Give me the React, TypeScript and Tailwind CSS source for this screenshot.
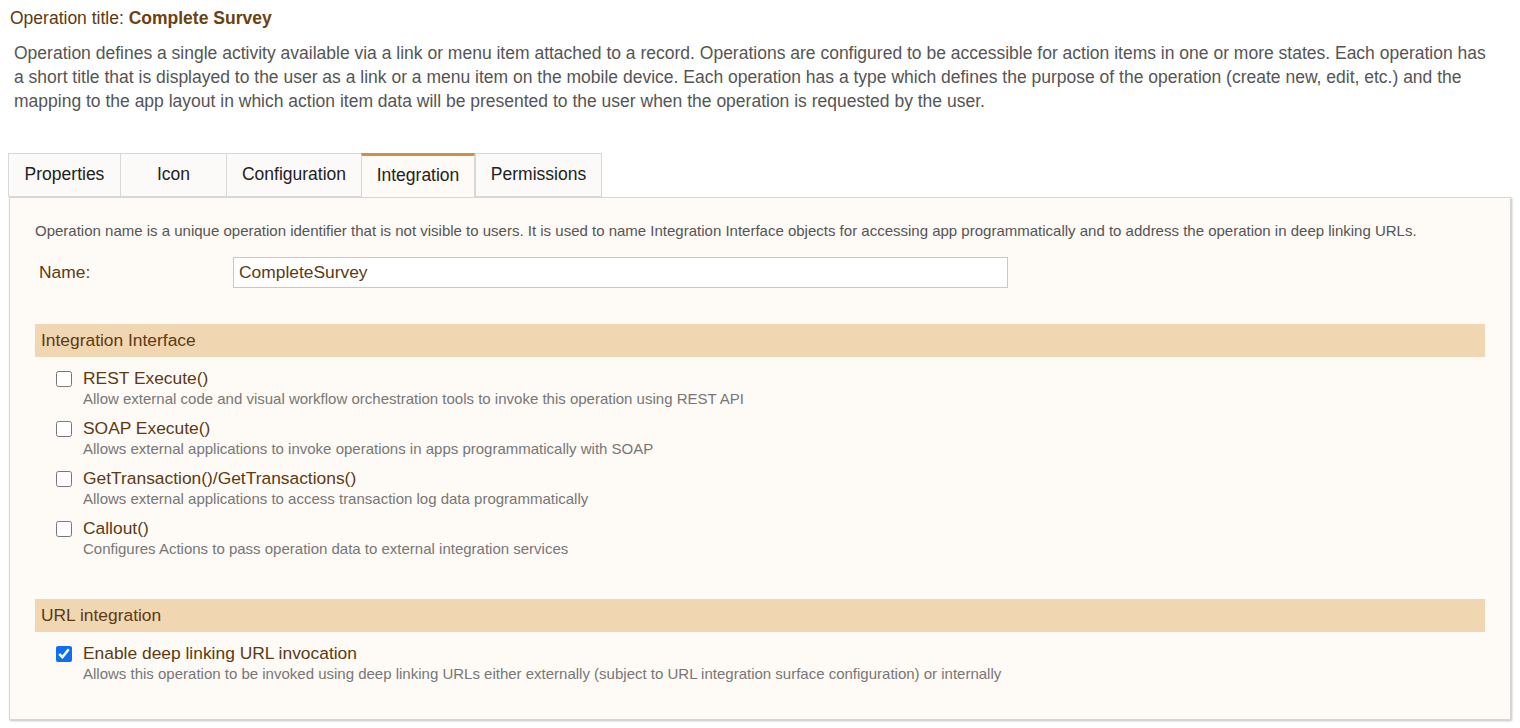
import { useState } from 'react';

const tabs = ['Properties', 'Icon', 'Configuration', 'Integration', 'Permissions'];
const tabWidths = ['w-[112px]', 'w-[106px]', 'w-[135px]', 'w-[114px]', 'w-[127px]'];

const interfaceOptions = [
  { title: 'REST Execute()', desc: 'Allow external code and visual workflow orchestration tools to invoke this operation using REST API' },
  { title: 'SOAP Execute()', desc: 'Allows external applications to invoke operations in apps programmatically with SOAP' },
  { title: 'GetTransaction()/GetTransactions()', desc: 'Allows external applications to access transaction log data programmatically' },
  { title: 'Callout()', desc: 'Configures Actions to pass operation data to external integration services' },
];

function OptionRow({ title, desc, checked }: { title: string; desc: string; checked?: boolean }) {
  const [on, setOn] = useState(!!checked);
  return (
    <label className="flex items-start pl-[21px] h-[50px]">
      <input
        type="checkbox"
        checked={on}
        onChange={() => setOn(!on)}
        className="mt-[3px] size-[16px] m-0 accent-[#0b6ff0]"
      />
      <div className="ml-[11px]">
        <div className="text-[17.4px] leading-[20px] text-[#5c3a14]">{title}</div>
        <div className="text-[15px] leading-[18px] mt-[2px] text-[#777]">{desc}</div>
      </div>
    </label>
  );
}

function SectionHeader({ children }: { children: string }) {
  return (
    <div className="h-[33px] bg-[#f1d6b2] flex items-center pl-[6px] text-[17.4px] text-[#5c3a14]">{children}</div>
  );
}

export default function App() {
  const [active, setActive] = useState(3);
  const [name, setName] = useState('CompleteSurvey');

  return (
    <div className="w-[1520px] h-[728px] bg-white font-['Liberation_Sans',Arial,sans-serif] overflow-hidden">
      {/* Header */}
      <div className="pl-[10px] pt-[8px] text-[17.5px] leading-[20px] text-[#5c3a14]">
        Operation title: <span className="font-bold text-[#6b4211]">Complete Survey</span>
      </div>
      <p className="pl-[14px] pr-[20px] mt-[13px] text-[17.5px] leading-[24px] text-[#555]">
        Operation defines a single activity available via a link or menu item attached to a record. Operations are configured to be accessible for action items in one or more states. Each operation has a short title that is displayed to the user as a link or a menu item on the mobile device. Each operation has a type which defines the purpose of the operation (create new, edit, etc.) and the mapping to the app layout in which action item data will be presented to the user when the operation is requested by the user.
      </p>

      {/* Tabs */}
      <div className="pl-[8px] mt-[40px] flex relative z-10">
        {tabs.map((t, i) => (
          <button
            key={t}
            onClick={() => setActive(i)}
            className={
              `${tabWidths[i]} h-[44px] text-[17.5px] text-[#222] border-l border-[#d8d8d8] pb-[2px] ` +
              (i === tabs.length - 1 ? 'border-r ' : '') +
              (i === active
                ? 'bg-[#fefaf5] border-t-[3px] border-t-[#c9914c] border-r border-r-[#d8d8d8] -mb-px'
                : 'bg-[#fbfaf8] border-t border-t-[#d8d8d8] border-b border-b-[#d8d8d8]')
            }
          >
            {t}
          </button>
        ))}
      </div>

      {/* Panel */}
      <div className="ml-[9px] w-[1502px] h-[523px] bg-[#fefaf5] border border-[#d6d6d6] shadow-[1px_1px_2px_rgba(0,0,0,0.25)] px-[25px]">
        <p className="mt-[24px] text-[15px] leading-[18px] text-[#555]">
          Operation name is a unique operation identifier that is not visible to users. It is used to name Integration Interface objects for accessing app programmatically and to address the operation in deep linking URLs.
        </p>
        <div className="flex items-center mt-[17px]">
          <span className="w-[198px] pl-[4px] text-[17.4px] text-[#5c3a14]">Name:</span>
          <input
            value={name}
            onChange={(e) => setName(e.target.value)}
            className="w-[775px] h-[31px] border border-[#c8c8c8] bg-white px-[5px] text-[17.4px] text-[#5c3a14] outline-none"
          />
        </div>

        <div className="mt-[36px] w-[1450px]">
          <SectionHeader>Integration Interface</SectionHeader>
          <div className="pt-[11px]">
            {interfaceOptions.map((o) => (
              <OptionRow key={o.title} title={o.title} desc={o.desc} />
            ))}
          </div>
        </div>

        <div className="mt-[31px] w-[1450px]">
          <SectionHeader>URL integration</SectionHeader>
          <div className="pt-[11px]">
            <OptionRow
              title="Enable deep linking URL invocation"
              desc="Allows this operation to be invoked using deep linking URLs either externally (subject to URL integration surface configuration) or internally"
              checked
            />
          </div>
        </div>
      </div>
    </div>
  );
}
